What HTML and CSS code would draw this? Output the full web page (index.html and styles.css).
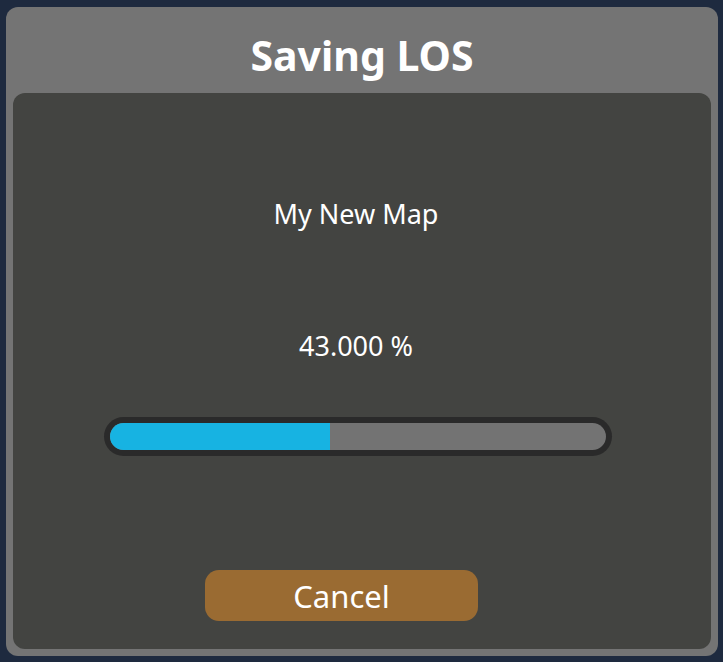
FILE: index.html
```html
<!DOCTYPE html>
<html>
<head>
<meta charset="utf-8">
<link rel="stylesheet" href="styles.css">
</head>
<body>
<div class="dialog">
  <div class="title">Saving LOS</div>
  <div class="content">
    <div class="name">My New Map</div>
    <div class="percent">43.000 %</div>
    <div class="bar">
      <div class="track">
        <div class="fill" style="width: 44.4%"></div>
      </div>
    </div>
    <div class="actions">
      <button class="cancel">Cancel</button>
    </div>
  </div>
</div>
</body>
</html>
```
FILE: styles.css
```css
html, body {
  margin: 0;
  height: 100%;
}
body {
  background: #1e2a3f;
  padding: 7px 5px 6px 6px;
  box-sizing: border-box;
  font-family: "Noto Sans", "Open Sans", sans-serif;
  color: #ffffff;
}
.dialog {
  height: 100%;
  background: #747474;
  border-radius: 12px;
  padding: 0 7px 7px 7px;
  box-sizing: border-box;
  display: flex;
  flex-direction: column;
}
.title {
  padding-top: 10px;
  height: 86px;
  box-sizing: border-box;
  line-height: 76px;
  text-align: center;
  font-weight: 700;
  font-size: 41px;
}
.content {
  flex: 1;
  background: #434441;
  border-radius: 12px;
  display: flex;
  flex-direction: column;
  align-items: center;
  padding: 106px 12px 0 0;
  box-sizing: border-box;
}
.name {
  font-size: 27px;
  line-height: 30px;
}
.percent {
  margin-top: 102px;
  font-size: 27px;
  line-height: 30px;
}
.bar {
  margin-top: 56px;
  margin-left: 4px;
  width: 508px;
  height: 39px;
  box-sizing: border-box;
  padding: 6px;
  background: #2a2a2a;
  border-radius: 20px;
}
.track {
  height: 100%;
  background: #737373;
  border-radius: 14px;
  overflow: hidden;
}
.fill {
  height: 100%;
  background: #17b3e2;
}
.actions {
  margin-top: 114px;
  margin-left: -29px;
}
.cancel {
  width: 273px;
  height: 51px;
  border: none;
  border-radius: 14px;
  background: #9a6b32;
  color: #ffffff;
  font-family: "Noto Sans", "Open Sans", sans-serif;
  font-size: 31px;
  padding: 0;
  display: block;
}
```
